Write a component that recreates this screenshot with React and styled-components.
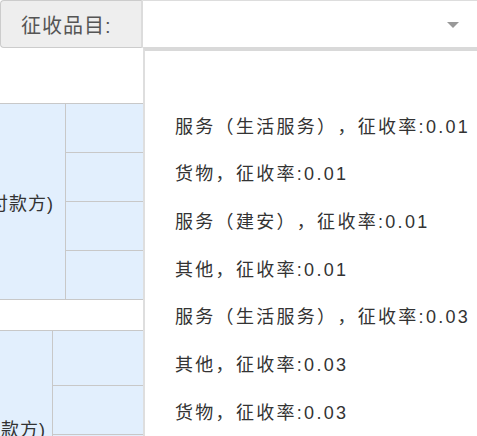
import React from "react";
import styled, { createGlobalStyle } from "styled-components";

const Global = createGlobalStyle`
  html, body { margin: 0; padding: 0; background: #fff; }
  body {
    font-family: "Liberation Sans", Arial, "Noto Sans CJK SC", sans-serif;
    color: #333;
    overflow: hidden;
  }
`;

const Page = styled.div`
  position: relative;
  width: 477px;
  height: 436px;
  overflow: hidden;
`;

const FieldRow = styled.div`
  display: flex;
  height: 48px;
`;

const Label = styled.div`
  box-sizing: border-box;
  width: 143px;
  flex: none;
  display: flex;
  align-items: center;
  padding-left: 20px;
  background: #eeeeee;
  border: 1px solid #cccccc;
  border-right: 2px solid #dcdcdc;
  border-radius: 4px 0 0 4px;
  font-size: 20px;
  letter-spacing: 1px;
  color: #555;
`;

const Select = styled.div`
  box-sizing: border-box;
  flex: 1;
  display: flex;
  align-items: center;
  justify-content: flex-end;
  padding-right: 18px;
  background: #fff;
  border-top: 1px solid #dddddd;
  border-bottom: 1px solid #cccccc;
`;

const Caret = styled.span`
  width: 0;
  height: 0;
  border-left: 6px solid transparent;
  border-right: 6px solid transparent;
  border-top: 6px solid #999;
  margin-top: 2px;
`;

const Spacer = styled.div`
  height: ${(p) => p.$h}px;
`;

const Table = styled.div`
  display: grid;
  grid-template-columns: ${(p) => p.$first}px 1fr;
  grid-template-rows: ${(p) => p.$rows};
  gap: 1px;
  padding: 1px 0;
  background: #c8c8c8;
`;

const HeadCell = styled.div`
  grid-row: 1 / -1;
  background: #e2effd;
  display: flex;
  align-items: center;
  justify-content: flex-end;
  padding-right: ${(p) => p.$pr}px;
  white-space: nowrap;
  font-size: 18px;
  letter-spacing: 1px;
  color: #333;
`;

const Cell = styled.div`
  background: #e2effd;
`;

const Dropdown = styled.div`
  position: absolute;
  top: 47px;
  left: 143px;
  right: -10px;
  bottom: -10px;
  background: #fff;
  border-top: 4px solid #d9d9d9;
  border-left: 2px solid rgba(0, 0, 0, 0.13);
  padding-top: 2px;
`;

const Option = styled.div`
  height: 47.7px;
  display: flex;
  align-items: center;
  padding-left: 30px;
  font-size: 18px;
  letter-spacing: 2.3px;
  text-spacing-trim: space-all;
  color: #333;
  white-space: nowrap;
`;

const options = [
  "",
  "服务（生活服务），征收率:0.01",
  "货物，征收率:0.01",
  "服务（建安），征收率:0.01",
  "其他，征收率:0.01",
  "服务（生活服务），征收率:0.03",
  "其他，征收率:0.03",
  "货物，征收率:0.03",
];

export default function App() {
  return (
    <Page>
      <Global />
      <FieldRow>
        <Label>征收品目:</Label>
        <Select>
          <Caret />
        </Select>
      </FieldRow>
      <Spacer $h={55} />
      <Table $first={65} $rows="48px 48px 48px 48px">
        <HeadCell $pr={11}>销售方(付款方)</HeadCell>
        <Cell />
        <Cell />
        <Cell />
        <Cell />
      </Table>
      <Spacer $h={30} />
      <Table $first={52} $rows="54px 48px 48px 40px">
        <HeadCell $pr={6}>购买方(付款方)</HeadCell>
        <Cell />
        <Cell />
        <Cell />
        <Cell />
      </Table>
      <Dropdown>
        {options.map((o, i) => (
          <Option key={i}>{o}</Option>
        ))}
      </Dropdown>
    </Page>
  );
}
